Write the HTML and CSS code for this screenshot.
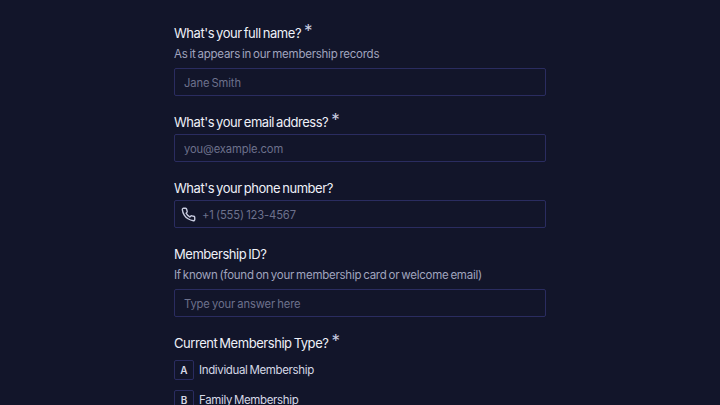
FILE: index.html
```html
<!DOCTYPE html>
<html lang="en">
<head>
    <meta charset="UTF-8">
    <title>Membership form</title>
    <link rel="stylesheet" href="styles.css">
</head>
<body>
    <form class="form">
        <div class="field">
            <label class="label">What's your full name?<span class="req">*</span></label>
            <p class="hint">As it appears in our membership records</p>
            <div class="input"><span class="placeholder">Jane Smith</span></div>
        </div>
        <div class="field">
            <label class="label">What's your email address?<span class="req">*</span></label>
            <div class="input"><span class="placeholder">you@example.com</span></div>
        </div>
        <div class="field">
            <label class="label">What's your phone number?</label>
            <div class="input input-phone">
                <svg class="phone-icon" viewBox="0 0 24 24" fill="none" stroke="currentColor" stroke-width="2.2" stroke-linecap="round" stroke-linejoin="round">
                    <path d="M22 16.92v3a2 2 0 0 1-2.18 2 19.8 19.8 0 0 1-8.63-3.07 19.5 19.5 0 0 1-6-6 19.8 19.8 0 0 1-3.07-8.67A2 2 0 0 1 4.11 2h3a2 2 0 0 1 2 1.72c.13.96.36 1.9.7 2.81a2 2 0 0 1-.45 2.11L8.09 9.91a16 16 0 0 0 6 6l1.27-1.27a2 2 0 0 1 2.11-.45c.91.34 1.85.57 2.81.7A2 2 0 0 1 22 16.92z"/>
                </svg>
                <span class="placeholder">+1 (555) 123-4567</span>
            </div>
        </div>
        <div class="field">
            <label class="label">Membership ID?</label>
            <p class="hint">If known (found on your membership card or welcome email)</p>
            <div class="input"><span class="placeholder">Type your answer here</span></div>
        </div>
        <div class="field">
            <label class="label">Current Membership Type?<span class="req">*</span></label>
            <div class="options">
                <div class="option"><span class="key">A</span>Individual Membership</div>
                <div class="option"><span class="key">B</span>Family Membership</div>
            </div>
        </div>
    </form>
</body>
</html>
```

FILE: styles.css
```css
html, body {
    height: 100%;
    overflow: hidden;
}
body {
    margin: 0;
    background-color: #12152a;
    font-family: "Inter", "Liberation Sans", sans-serif;
    color: #eef0f8;
}
.form {
    width: 372px;
    margin: 0 auto;
    padding-top: 23px;
    display: flex;
    flex-direction: column;
    gap: 16px;
}
.label {
    display: block;
    height: 20px;
    font-size: 13px;
    line-height: 21px;
    font-weight: 400;
    letter-spacing: -0.45px;
    word-spacing: -1.2px;
}
.req {
    margin-left: 3px;
    font-size: 17px;
    line-height: 14px;
    color: #c9cce0;
    position: relative;
    top: -1px;
}
.hint {
    margin: 2px 0 5px;
    font-size: 11.5px;
    line-height: 18px;
    color: #a0a4be;
    letter-spacing: -0.25px;
    word-spacing: -1px;
}
.input {
    box-sizing: border-box;
    height: 28px;
    margin-top: 2px;
    padding: 0 9px;
    display: flex;
    align-items: center;
    border: 1px solid #2a2c60;
    border-radius: 2px;
    font-size: 11.2px;
    letter-spacing: -0.12px;
    word-spacing: -0.8px;
}
.hint + .input {
    margin-top: 0;
}
.input-phone {
    padding-left: 6px;
    gap: 6px;
}
.phone-icon {
    width: 15px;
    height: 15px;
    color: #c9cce0;
}
.placeholder {
    padding-top: 2px;
    color: #6d718c;
}
.options {
    margin-top: 7px;
    display: flex;
    flex-direction: column;
    gap: 10px;
}
.option {
    display: flex;
    align-items: center;
    gap: 5px;
    font-size: 11.5px;
    letter-spacing: -0.35px;
    word-spacing: -1px;
    color: #d5d8e6;
}
.key {
    box-sizing: border-box;
    width: 20px;
    height: 20px;
    display: flex;
    align-items: center;
    justify-content: center;
    border: 1px solid #2a2c60;
    border-radius: 2px;
    font-size: 10px;
    font-weight: 600;
    letter-spacing: 0;
}
```
